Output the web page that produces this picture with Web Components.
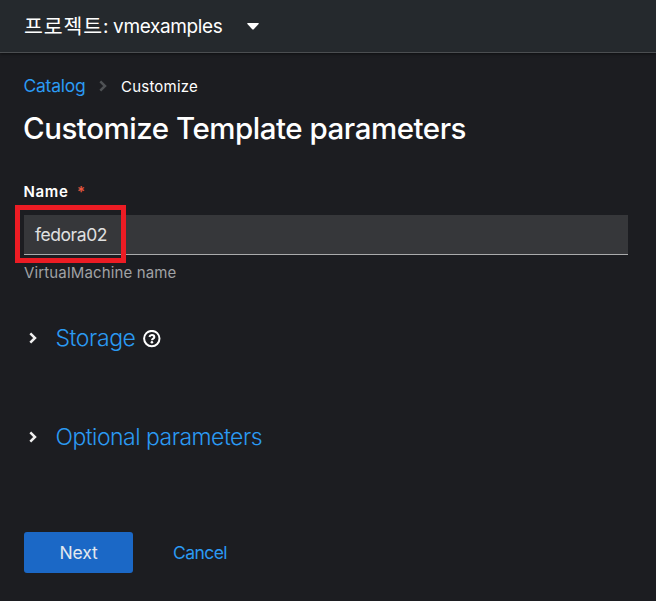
<!DOCTYPE html>
<html lang="ko">
<head>
<meta charset="utf-8">
<title>Customize Template parameters</title>
<style>
html,body{margin:0;height:100%;background:#1c1d21;overflow:hidden}
body{font-family:Inter,"Noto Sans CJK KR",sans-serif;color:#fff}
</style>
</head>
<body>
<template-page></template-page>
<script>
function define(name, html, ready) {
  const t = document.createElement('template');
  t.innerHTML = html;
  customElements.define(name, class extends HTMLElement {
    constructor() {
      super();
      this.attachShadow({mode: 'open'}).append(t.content.cloneNode(true));
    }
    connectedCallback() { if (ready) ready(this); }
  });
}

// A single line of text whose tracking is adjusted to a given width.
define('fit-text', `<style>:host{display:inline-block;white-space:pre;flex:none}span{display:inline-block}</style><span><slot></slot></span>`, el => {
  const target = +el.getAttribute('width');
  const span = el.shadowRoot.querySelector('span');
  const n = [...el.textContent].length;
  const natural = span.getBoundingClientRect().width;
  span.style.letterSpacing = ((target - natural) / n).toFixed(3) + 'px';
  el.style.width = target + 'px';
});

define('angle-icon', `<style>:host{display:block;width:8px;height:12px;flex:none}svg{display:block}</style>
<svg width="8" height="12" viewBox="0 0 8 12" fill="none" stroke="currentColor" stroke-width="2.5"><path d="M1.3 1.3 6 6 1.3 10.7"/></svg>`);

define('help-icon', `<style>:host{display:block;width:18px;height:18px;flex:none}svg{display:block}</style>
<svg width="18" height="18" viewBox="0 0 18 18" fill="none" stroke="#fff"><circle cx="8.8" cy="8.6" r="7.7" stroke-width="2"/><path d="M6.4 6.9C6.8 5.6 7.7 5 8.9 5c1.4 0 2.4.8 2.4 1.9 0 1.8-2.3 1.6-2.3 3.3" stroke-width="2.1"/><circle cx="8.9" cy="12.3" r="1.3" fill="#fff" stroke="none"/></svg>`);

define('project-bar', `<style>
:host{display:flex;align-items:center;height:52px;padding-left:24px;background:#25292d;border-bottom:1px solid #4b4e51;box-shadow:0 1px 3px #0008;font-size:19px;position:relative}
.ko{font-family:"Noto Sans CJK KR",sans-serif;font-weight:400;font-size:20.5px;line-height:30px;margin-top:-2px}
svg{margin-left:24px}</style>
<fit-text class="ko" width="79">프로젝트</fit-text><fit-text width="119.5">: vmexamples</fit-text>
<svg width="12" height="7" viewBox="0 0 12 7"><path d="M.8 0h10.4q1 .3.4 1.1L6.8 6.2q-.8.8-1.6 0L.4 1.1Q-.2.3.8 0Z" fill="#fff"/></svg>`);

define('crumb-trail', `<style>
:host{display:flex;align-items:center;height:22px;margin-top:22px;line-height:22px}
.link{font-size:17.5px;color:#2b9af3;margin-left:-.5px}angle-icon{color:#4f5255;margin:-1px 14px 0 13.5px}.now{font-size:15px;margin-top:1px}</style>
<fit-text class="link" width="62">Catalog</fit-text><angle-icon></angle-icon><fit-text class="now" width="77">Customize</fit-text>`);

define('name-field', `<style>
:host{display:block;margin-top:32px}
label{display:flex;height:24px;line-height:24px;font-size:15px;font-weight:600}
label fit-text{margin-left:-.5px}
i{font-style:normal;color:#e8573f;margin-left:8.5px;font-size:15px}
.box{display:flex;align-items:center;height:39px;margin-top:11px;background:#36373a;border-bottom:1px solid #aaabac;padding-left:11px;color:#e0e0e0;font-size:17.5px;position:relative}
.mark{position:absolute;left:-9px;top:-10px;width:101px;height:48px;border:5px solid #ed1c24}
.help{height:24px;line-height:24px;margin-top:6px;font-size:15px;color:#a0a2a5}</style>
<label><fit-text width="45">Name</fit-text><i>*</i></label>
<div class="box"><fit-text width="72">fedora02</fit-text><div class="mark"></div></div>
<div class="help"><fit-text width="152.5">VirtualMachine name</fit-text></div>`);

define('expand-section', `<style>
:host{display:flex;align-items:center;height:32px;line-height:32px;font-size:23px;font-weight:350;color:#2b9af3}
angle-icon{color:#f0f0f0;margin:0 19px 0 4.5px}</style>
<angle-icon></angle-icon><slot></slot>`);

define('action-bar', `<style>
:host{display:flex;margin-top:79px;gap:40px;align-items:center;font-size:17.5px;line-height:41px}
.next{display:flex;justify-content:center;width:109px;height:41px;border-radius:3px;background:#1b68c6;color:#e4e8ee}
.cancel{color:#2b9af3}</style>
<div class="next"><fit-text width="38">Next</fit-text></div><fit-text class="cancel" width="54">Cancel</fit-text>`);

define('template-page', `<style>
:host{display:block}main{padding:0 28px 0 24px;display:flow-root}
h1{margin:11px 0 0 -1px;height:40px;line-height:40px;font-size:29.5px;font-weight:500}
.first{margin-top:37px}.second{margin-top:67px}help-icon{margin:2px 0 0 7px}</style>
<project-bar></project-bar>
<main><crumb-trail></crumb-trail><h1><fit-text width="443">Customize Template parameters</fit-text></h1>
<name-field></name-field>
<expand-section class="first"><fit-text width="80">Storage</fit-text><help-icon></help-icon></expand-section>
<expand-section class="second"><fit-text width="206.5">Optional parameters</fit-text></expand-section>
<action-bar></action-bar></main>`);
</script>
</body>
</html>
